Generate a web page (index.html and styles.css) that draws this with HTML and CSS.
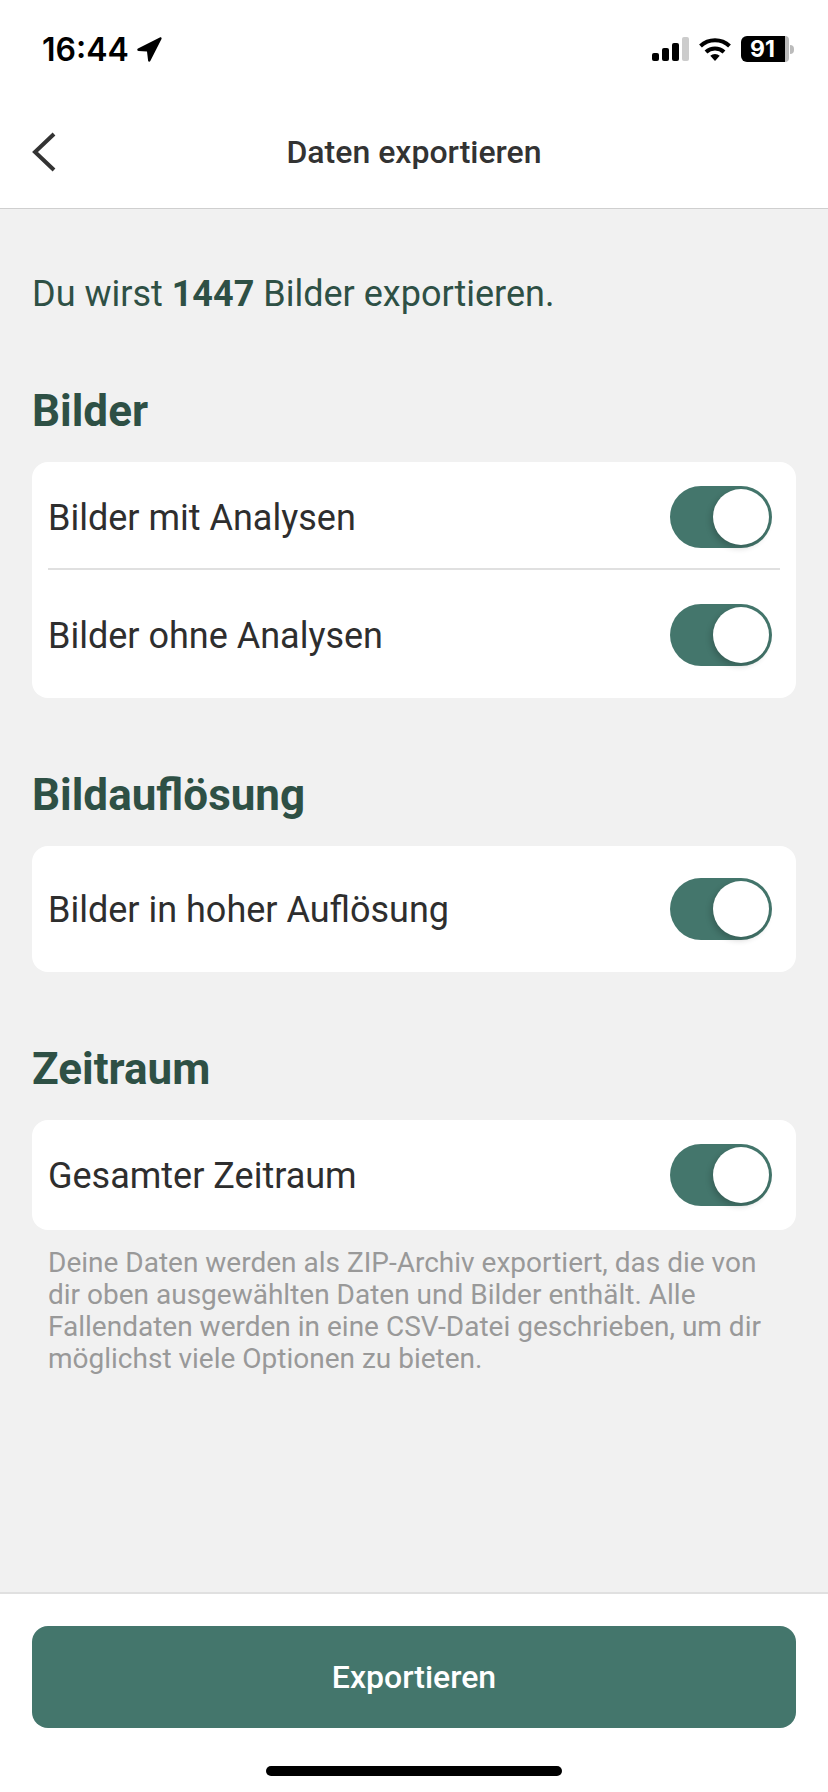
FILE: index.html
```html
<!DOCTYPE html>
<html lang="de">
<head>
  <meta charset="UTF-8">
  <meta name="viewport" content="width=device-width, initial-scale=1.0">
  <title>Daten exportieren</title>
  <link rel="stylesheet" href="styles.css">
</head>
<body>
  <div class="screen">
    <header class="header">
      <div class="status-bar">
        <div class="status-left">
          <span class="time">16:44</span>
          <svg class="location" width="25" height="25" viewBox="0 0 25 25"><path d="M1 11.600 22.800.4c1.100-.6 2.200.5 1.700 1.600L13.300 24c-.5 1.100-2 .9-2.200-.3L10 14.500l-8.500-.6c-1.400-.1-1.700-1.700-.5-2.300Z" fill="#000"/></svg>
        </div>
        <div class="status-right">
          <svg width="37" height="24" viewBox="0 0 37 24">
            <rect x="0" y="16" width="7" height="8" rx="2" fill="#000"/>
            <rect x="10" y="11" width="7" height="13" rx="2" fill="#000"/>
            <rect x="20" y="6" width="7" height="18" rx="2" fill="#000"/>
            <rect x="30" y="0" width="7" height="24" rx="2" fill="#ccc"/>
          </svg>
          <svg class="wifi" width="32" height="24" viewBox="0 0 32 24">
            <path d="M1.500 9a21 21 0 0 1 29 0" fill="none" stroke="#000" stroke-width="4"/>
            <path d="M7 15a13 13 0 0 1 18 0" fill="none" stroke="#000" stroke-width="4"/>
            <path d="M11.300 18.800a6.800 6.800 0 0 1 9.400 0L16 24Z" fill="#000"/>
          </svg>
          <div class="battery">
            <span class="battery-level">91</span>
            <span class="battery-rest"></span>
            <span class="battery-cap"></span>
          </div>
        </div>
      </div>
      <nav class="nav">
        <svg class="back" width="26" height="40" viewBox="0 0 26 40"><path d="M23 2 4 20l19 18" fill="none" stroke="#333" stroke-width="4"/></svg>
        <h1 class="title">Daten exportieren</h1>
      </nav>
    </header>

    <main class="content">
      <p class="intro">Du wirst <strong>1447</strong> Bilder exportieren.</p>

      <h2 class="section-title">Bilder</h2>
      <div class="card">
        <div class="row row-first">
          <span class="row-label">Bilder mit Analysen</span>
          <div class="toggle"><div class="knob"></div></div>
        </div>
        <div class="divider"></div>
        <div class="row row-last">
          <span class="row-label">Bilder ohne Analysen</span>
          <div class="toggle"><div class="knob"></div></div>
        </div>
      </div>

      <h2 class="section-title">Bildauflösung</h2>
      <div class="card">
        <div class="row row-single">
          <span class="row-label">Bilder in hoher Auflösung</span>
          <div class="toggle"><div class="knob"></div></div>
        </div>
      </div>

      <h2 class="section-title">Zeitraum</h2>
      <div class="card">
        <div class="row">
          <span class="row-label">Gesamter Zeitraum</span>
          <div class="toggle"><div class="knob"></div></div>
        </div>
      </div>
      <p class="note">Deine Daten werden als ZIP-Archiv exportiert, das die von dir oben ausgewählten Daten und Bilder enthält. Alle Fallendaten werden in eine CSV-Datei geschrieben, um dir möglichst viele Optionen zu bieten.</p>
    </main>

    <footer class="footer">
      <button class="export-btn">Exportieren</button>
      <div class="home-bar"></div>
    </footer>
  </div>
</body>
</html>
```

FILE: styles.css
```css
* {
  box-sizing: border-box;
}
html, body {
  margin: 0;
  padding: 0;
}
body {
  background-color: #f1f1f1;
  font-family: Roboto, Arial, sans-serif;
}
.screen {
  display: flex;
  flex-direction: column;
  width: 828px;
  height: 1792px;
  overflow: hidden;
}

/* header */
.header {
  height: 209px;
  background: #fff;
  border-bottom: 1px solid #cfcfcf;
}
.status-bar {
  display: flex;
  justify-content: space-between;
  align-items: center;
  height: 98px;
  padding: 0 34px 0 42px;
}
.status-left {
  display: flex;
  align-items: center;
  gap: 8px;
}
.time {
  font-family: Inter, sans-serif;
  font-size: 32px;
  font-weight: 600;
  color: #000;
}
.status-right {
  display: flex;
  align-items: center;
  gap: 10px;
}
.battery {
  display: flex;
  align-items: center;
  height: 26px;
}
.battery-level {
  width: 44px;
  height: 26px;
  padding-left: 9px;
  background: #000;
  border-radius: 6px 0 0 6px;
  color: #fff;
  font-family: Inter, sans-serif;
  font-size: 23px;
  font-weight: 700;
  line-height: 26px;
}
.battery-rest {
  width: 4px;
  height: 26px;
  background: #bbb;
  border-radius: 0 6px 6px 0;
}
.battery-cap {
  width: 4px;
  height: 9px;
  margin-left: 1px;
  background: #bbb;
  border-radius: 0 4px 4px 0;
}
.nav {
  position: relative;
  display: flex;
  justify-content: center;
  align-items: center;
  height: 110px;
  padding-bottom: 2px;
}
.back {
  position: absolute;
  left: 31px;
  top: 34px;
}
.title {
  margin: 0;
  font-size: 32px;
  font-weight: 500;
  color: #333;
}

/* main */
.content {
  flex: 1;
  padding: 65px 32px 0;
}
.intro {
  margin: 0;
  font-size: 36px;
  line-height: 40px;
  color: #2e5045;
}
.section-title {
  margin: 73px 0 27px;
  font-size: 44px;
  line-height: 48px;
  font-weight: 700;
  color: #2e5045;
}
.card {
  background: #fff;
  border-radius: 16px;
}
.row {
  display: flex;
  justify-content: space-between;
  align-items: center;
  padding: 24px 24px 24px 16px;
  font-size: 36px;
  color: #2e2e2e;
}
.row-label {
  padding-top: 2px;
}
.row-first {
  padding-bottom: 20px;
}
.row-last {
  padding-top: 34px;
  padding-bottom: 32px;
}
.row-single {
  padding-top: 32px;
  padding-bottom: 32px;
}
.divider {
  height: 2px;
  margin: 0 16px;
  background: #e0e0e0;
}
.toggle {
  display: flex;
  justify-content: flex-end;
  align-items: center;
  width: 102px;
  height: 62px;
  padding-right: 3px;
  background: #44766c;
  border-radius: 31px;
}
.knob {
  width: 56px;
  height: 56px;
  background: #fff;
  border-radius: 50%;
  box-shadow: -2px 3px 6px rgba(0, 0, 0, 0.2);
}
.note {
  margin: 17px 0 0;
  padding: 0 16px;
  font-size: 28px;
  line-height: 32px;
  color: #999;
}

/* footer */
.footer {
  position: relative;
  height: 200px;
  padding: 32px 32px 0;
  background: #fff;
  border-top: 2px solid #e0e0e0;
}
.export-btn {
  display: block;
  width: 100%;
  height: 102px;
  border: none;
  border-radius: 16px;
  background: #44766c;
  color: #fff;
  font-family: Roboto, Arial, sans-serif;
  font-size: 32px;
  font-weight: 500;
}
.home-bar {
  position: absolute;
  left: 266px;
  top: 172px;
  width: 296px;
  height: 10px;
  background: #000;
  border-radius: 5px;
}
```
